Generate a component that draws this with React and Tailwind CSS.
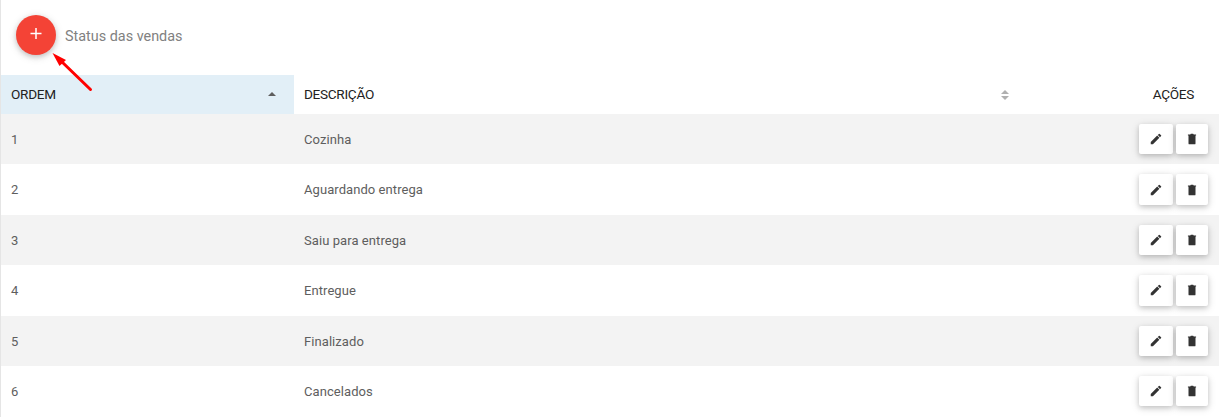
const status = [
  { ordem: 1, descricao: 'Cozinha' },
  { ordem: 2, descricao: 'Aguardando entrega' },
  { ordem: 3, descricao: 'Saiu para entrega' },
  { ordem: 4, descricao: 'Entregue' },
  { ordem: 5, descricao: 'Finalizado' },
  { ordem: 6, descricao: 'Cancelados' }
]

const botao = 'h-[30.4px] flex items-center justify-center bg-white rounded-[2px] text-[#333] shadow-[0_2px_5px_rgba(0,0,0,0.16),0_2px_10px_rgba(0,0,0,0.12)]'

const IconeEditar = () => (
  <svg width="14" height="14" viewBox="0 0 24 24" fill="currentColor">
    <path d="M3 17.25V21h3.75L17.8 9.94l-3.75-3.75L3 17.25zM20.7 7.04a1 1 0 0 0 0-1.41l-2.34-2.34a1 1 0 0 0-1.41 0l-1.83 1.83 3.75 3.75 1.83-1.83z" />
  </svg>
)

const IconeExcluir = () => (
  <svg width="14" height="14" viewBox="0 0 24 24" fill="currentColor">
    <path d="M6 6h12v13.500a1.500 1.500 0 0 1-1.500 1.500h-9A1.500 1.500 0 0 1 6 19.500V6zM19 6.200H5V4.200h4L10 3h4l1 1.200h4v2z" />
  </svg>
)

const Acoes = () => (
  <div className="flex gap-[3px] w-[80px]">
    <button className={`${botao} w-[34px]`} aria-label="Editar">
      <IconeEditar />
    </button>
    <button className={`${botao} w-8`} aria-label="Excluir">
      <IconeExcluir />
    </button>
  </div>
)

const App = () => {
  return (
    <div className="relative h-[417px] overflow-hidden bg-white border-l border-[#e5e5e5] font-[Roboto,sans-serif] text-[13px] text-[#5e5e5e]">
      <header className="h-[75px] flex items-start pt-[15px] pl-[15px]">
        <button
          className="w-10 h-10 rounded-full bg-[#f44336] flex items-center justify-center shadow-[0_2px_5px_rgba(0,0,0,0.16),0_2px_10px_rgba(0,0,0,0.12)]"
          aria-label="Adicionar"
        >
          <svg width="12" height="12" viewBox="0 0 12 12" className="mb-[2px]">
            <path d="M6 0v11M.5 5.500h11" stroke="#fff" strokeWidth="1.500" />
          </svg>
        </button>
        <h1 className="ml-[9px] mt-3 text-[14.4px] leading-5 text-[#818181]">Status das vendas</h1>
      </header>

      <div className="flex h-[39px] text-[13.6px] tracking-[-0.3px] text-[#222]">
        <div className="w-[293px] flex items-center justify-between pl-[10px] pr-[18px] bg-[#e2eff7]">
          <span>ORDEM</span>
          <svg width="8" height="4" viewBox="0 0 8 4" className="mb-px">
            <path d="M0 4L4 0l4 4z" fill="#5e5e5e" />
          </svg>
        </div>
        <div className="w-[733px] flex items-center justify-between pl-[10px] pr-[18px]">
          <span>DESCRIÇÃO</span>
          <svg width="8" height="10" viewBox="0 0 8 10">
            <path d="M0 4L4 0l4 4zM0 6h8l-4 4z" fill="#b0b0b0" />
          </svg>
        </div>
        <div className="flex-1 flex items-center justify-end pr-[25px]">AÇÕES</div>
      </div>

      <div>
        {status.map((item) => (
          <div key={item.ordem} className="flex items-center h-[50.4px] odd:bg-[#f3f3f3] tracking-[0.07px]">
            <div className="w-[293px] pl-[10px] pt-px">{item.ordem}</div>
            <div className="flex-1 pl-[10px] pt-px">{item.descricao}</div>
            <Acoes />
          </div>
        ))}
      </div>

      {/* seta que aponta para o botão de adicionar */}
      <svg className="absolute left-[49px] top-[50px]" width="45" height="44" viewBox="0 0 45 44">
        <path d="M11 11L40.500 39.500" stroke="#f00" strokeWidth="3" strokeLinecap="round" />
        <path d="M2.500 3L16 10L9.500 16z" fill="#f00" />
      </svg>
    </div>
  )
}

export default App
